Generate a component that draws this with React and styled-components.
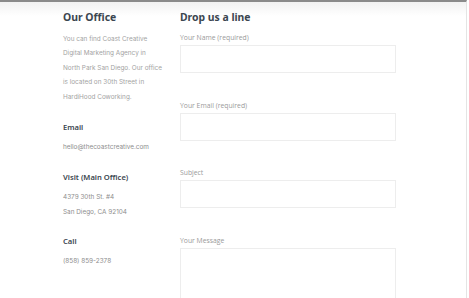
import React from "react";
import styled, { createGlobalStyle } from "styled-components";

const GlobalStyle = createGlobalStyle`
    body {
        margin: 0;
        background: #ffffff;
        font-family: "Inter", "Liberation Sans", sans-serif;
    }
`

const office = [
    { title: "Email", lines: ["hello@thecoastcreative.com"] },
    { title: "Visit (Main Office)", lines: ["4379 30th St. #4", "San Diego, CA 92104"] },
    { title: "Call", lines: ["(858) 859-2378"] },
];

const fields = [
    { label: "Your Name (required)", tall: false },
    { label: "Your Email (required)", tall: false },
    { label: "Subject", tall: false },
    { label: "Your Message", tall: true },
];

const App = () => {
    return (
        <>
        <GlobalStyle />
        <Page>
            <Content>
                <Office>
                    <Heading>Our Office</Heading>
                    <Intro>
                        You can find Coast Creative Digital Marketing Agency in North Park San Diego. Our office is located on 30th Street in HardiHood Coworking.
                    </Intro>
                    {office.map(item => (
                        <Block key={item.title}>
                            <BlockTitle>{item.title}</BlockTitle>
                            {item.lines.map(line => (
                                <BlockLine key={line}>{line}</BlockLine>
                            ))}
                        </Block>
                    ))}
                </Office>
                <Form>
                    <Heading>Drop us a line</Heading>
                    {fields.map(field => (
                        <Field key={field.label}>
                            <Label>{field.label}</Label>
                            <Input $tall={field.tall} />
                        </Field>
                    ))}
                </Form>
            </Content>
        </Page>
        </>
    );
}

const Page = styled.div`
    width: 467px;
    height: 298px;
    overflow: hidden;
    border-top: 2px solid #8b8b8b;
    border-right: 1px solid #e4e4e4;
    box-sizing: border-box;
    background: linear-gradient(#f2f2f2, #ffffff 14px);
`
const Content = styled.div`
    display: flex;
    gap: 17px;
    padding: 7px 0 0 63px;
`
const Office = styled.div`
    width: 100px;
    display: flex;
    flex-direction: column;
`
const Heading = styled.h2`
    margin: 0;
    font-family: "Noto Sans", sans-serif;
    font-weight: 700;
    font-size: 10.4px;
    line-height: 16px;
    color: #3b4650;
    white-space: nowrap;
`
const Intro = styled.p`
    margin: 7px 0 0;
    font-size: 6.4px;
    line-height: 14.4px;
    color: #a3a3a3;
`
const Block = styled.div`
    margin-top: 19.5px;
    display: flex;
    flex-direction: column;
    gap: 5px;
    &:first-of-type { margin-top: 18px; }
`
const BlockTitle = styled.h4`
    margin: 0 0 5px;
    font-family: "Noto Sans", sans-serif;
    font-weight: 600;
    font-size: 7.6px;
    line-height: 10px;
    color: #3b4650;
    white-space: nowrap;
`
const BlockLine = styled.span`
    font-size: 6.4px;
    line-height: 10px;
    color: #8e8e8e;
    white-space: nowrap;
`
const Form = styled.div`
    width: 216px;
    display: flex;
    flex-direction: column;
`
const Field = styled.div`
    margin-top: 8px;
    display: flex;
    flex-direction: column;
    gap: 3px;
    & + & { margin-top: 27.5px; }
`
const Label = styled.label`
    font-family: "Open Sans", sans-serif;
    font-size: 6.8px;
    line-height: 9px;
    color: #9a9a9a;
`
const Input = styled.div`
    height: ${props => props.$tall ? "80px" : "28px"};
    border: 1px solid #ededed;
    box-sizing: border-box;
    background: #ffffff;
`

export default App;
